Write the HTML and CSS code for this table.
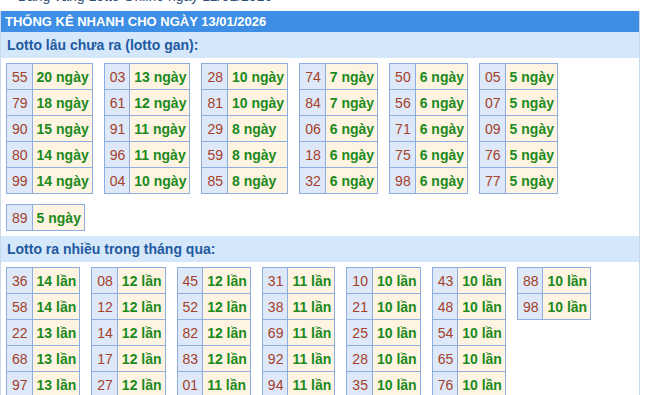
FILE: index.html
```html
<!DOCTYPE html>
<html lang="vi">
<head>
<meta charset="utf-8">
<link rel="stylesheet" href="styles.css">
</head>
<body>
<div class="top">» Bảng vàng Lotto Online ngày 12/01/2026</div>
<div class="box">
  <div class="head">THỐNG KÊ NHANH CHO NGÀY 13/01/2026</div>
  <div class="sub">Lotto lâu chưa ra (lotto gan):</div>
  <div class="grid">
    <table class="lt"><tr><td class="n">55</td><td class="v">20 ngày</td></tr><tr><td class="n">79</td><td class="v">18 ngày</td></tr><tr><td class="n">90</td><td class="v">15 ngày</td></tr><tr><td class="n">80</td><td class="v">14 ngày</td></tr><tr><td class="n">99</td><td class="v">14 ngày</td></tr></table>
    <table class="lt"><tr><td class="n">03</td><td class="v">13 ngày</td></tr><tr><td class="n">61</td><td class="v">12 ngày</td></tr><tr><td class="n">91</td><td class="v">11 ngày</td></tr><tr><td class="n">96</td><td class="v">11 ngày</td></tr><tr><td class="n">04</td><td class="v">10 ngày</td></tr></table>
    <table class="lt"><tr><td class="n">28</td><td class="v">10 ngày</td></tr><tr><td class="n">81</td><td class="v">10 ngày</td></tr><tr><td class="n">29</td><td class="v">8 ngày</td></tr><tr><td class="n">59</td><td class="v">8 ngày</td></tr><tr><td class="n">85</td><td class="v">8 ngày</td></tr></table>
    <table class="lt"><tr><td class="n">74</td><td class="v">7 ngày</td></tr><tr><td class="n">84</td><td class="v">7 ngày</td></tr><tr><td class="n">06</td><td class="v">6 ngày</td></tr><tr><td class="n">18</td><td class="v">6 ngày</td></tr><tr><td class="n">32</td><td class="v">6 ngày</td></tr></table>
    <table class="lt"><tr><td class="n">50</td><td class="v">6 ngày</td></tr><tr><td class="n">56</td><td class="v">6 ngày</td></tr><tr><td class="n">71</td><td class="v">6 ngày</td></tr><tr><td class="n">75</td><td class="v">6 ngày</td></tr><tr><td class="n">98</td><td class="v">6 ngày</td></tr></table>
    <table class="lt"><tr><td class="n">05</td><td class="v">5 ngày</td></tr><tr><td class="n">07</td><td class="v">5 ngày</td></tr><tr><td class="n">09</td><td class="v">5 ngày</td></tr><tr><td class="n">76</td><td class="v">5 ngày</td></tr><tr><td class="n">77</td><td class="v">5 ngày</td></tr></table>
    <table class="lt"><tr><td class="n">89</td><td class="v">5 ngày</td></tr></table>
  </div>
  <div class="sub">Lotto ra nhiều trong tháng qua:</div>
  <div class="grid">
    <table class="lt"><tr><td class="n">36</td><td class="v">14 lần</td></tr><tr><td class="n">58</td><td class="v">14 lần</td></tr><tr><td class="n">22</td><td class="v">13 lần</td></tr><tr><td class="n">68</td><td class="v">13 lần</td></tr><tr><td class="n">97</td><td class="v">13 lần</td></tr></table>
    <table class="lt"><tr><td class="n">08</td><td class="v">12 lần</td></tr><tr><td class="n">12</td><td class="v">12 lần</td></tr><tr><td class="n">14</td><td class="v">12 lần</td></tr><tr><td class="n">17</td><td class="v">12 lần</td></tr><tr><td class="n">27</td><td class="v">12 lần</td></tr></table>
    <table class="lt"><tr><td class="n">45</td><td class="v">12 lần</td></tr><tr><td class="n">52</td><td class="v">12 lần</td></tr><tr><td class="n">82</td><td class="v">12 lần</td></tr><tr><td class="n">83</td><td class="v">12 lần</td></tr><tr><td class="n">01</td><td class="v">11 lần</td></tr></table>
    <table class="lt"><tr><td class="n">31</td><td class="v">11 lần</td></tr><tr><td class="n">38</td><td class="v">11 lần</td></tr><tr><td class="n">69</td><td class="v">11 lần</td></tr><tr><td class="n">92</td><td class="v">11 lần</td></tr><tr><td class="n">94</td><td class="v">11 lần</td></tr></table>
    <table class="lt"><tr><td class="n">10</td><td class="v">10 lần</td></tr><tr><td class="n">21</td><td class="v">10 lần</td></tr><tr><td class="n">25</td><td class="v">10 lần</td></tr><tr><td class="n">28</td><td class="v">10 lần</td></tr><tr><td class="n">35</td><td class="v">10 lần</td></tr></table>
    <table class="lt"><tr><td class="n">43</td><td class="v">10 lần</td></tr><tr><td class="n">48</td><td class="v">10 lần</td></tr><tr><td class="n">54</td><td class="v">10 lần</td></tr><tr><td class="n">65</td><td class="v">10 lần</td></tr><tr><td class="n">76</td><td class="v">10 lần</td></tr></table>
    <table class="lt"><tr><td class="n">88</td><td class="v">10 lần</td></tr><tr><td class="n">98</td><td class="v">10 lần</td></tr></table>
  </div>
</div>
</body>
</html>
```
FILE: styles.css
```css
html, body {
  margin: 0;
  padding: 0;
  background: #ffffff;
  font-family: "Liberation Sans", Arial, sans-serif;
  overflow: hidden;
}

.top {
  height: 16px;
  line-height: 16px;
  margin-top: -12px;
  padding-left: 6px;
  font-size: 14px;
  color: #34507a;
  white-space: nowrap;
}

.box {
  box-sizing: border-box;
  width: 640px;
  margin-top: 7px;
  border-left: 1px solid #c9d9ec;
  border-right: 1px solid #c9d9ec;
}

.head {
  height: 21px;
  line-height: 22px;
  padding-left: 4px;
  background: #3d8ee4;
  color: #ffffff;
  font-size: 13px;
  font-weight: bold;
}

.sub {
  height: 26px;
  line-height: 26px;
  padding-left: 6px;
  background: #d5e7fa;
  color: #1f5aa0;
  font-size: 14px;
  font-weight: bold;
}

.grid {
  display: flex;
  flex-wrap: wrap;
  align-items: flex-start;
  width: 620px;
}

.lt {
  border-collapse: collapse;
  margin: 5px 6px 5px 5px;
  font-size: 14px;
}

.lt td {
  height: 25px;
  padding: 0;
  border: 1px solid #8eaee2;
  white-space: nowrap;
}

.lt .n {
  padding: 0 4px 0 5px;
  background: #dde8f8;
  color: #a5402a;
  text-align: center;
}

.lt .v {
  padding: 0 3px 0 4px;
  background: #fff4e2;
  color: #1c8a1c;
  font-weight: bold;
}
```
